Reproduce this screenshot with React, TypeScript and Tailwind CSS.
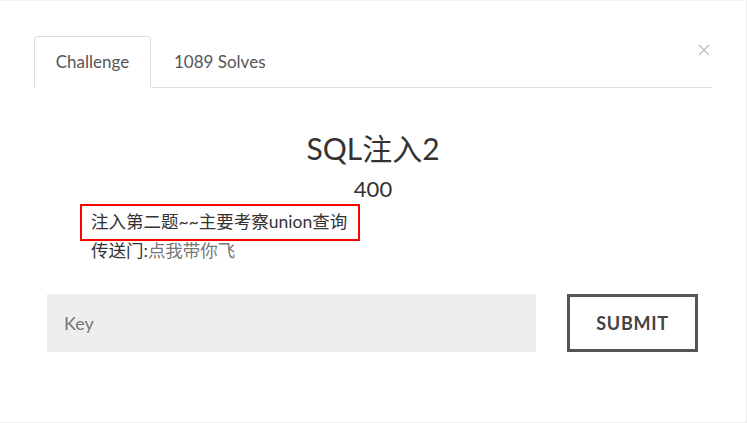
import React from 'react'

const font = { fontFamily: '"Lato", "Noto Sans CJK SC", sans-serif' }

export default function App() {
    return (
        <div
            className="w-[747px] h-[423px] bg-white border-t border-r border-b border-[#f0f0f0] overflow-hidden"
            style={font}
        >
            <div className="pt-[35px] px-[34px] w-full relative">
                {/* Tabs */}
                <div className="flex border-b border-[#ddd] h-[52px]">
                    <div className="w-[117px] h-[52px] -mb-px border border-[#ddd] border-b-white rounded-t-[4px] bg-white flex items-center justify-center text-[17px] text-[#555]">
                        Challenge
                    </div>
                    <div className="h-[51px] pl-[23px] flex items-center text-[17px] text-[#555]">
                        1089 Solves
                    </div>
                </div>

                {/* Close */}
                <button className="absolute right-[36px] top-[43px] w-[12px] h-[12px]">
                    <svg viewBox="0 0 12 12" className="w-[12px] h-[12px]">
                        <path d="M1 1L11 11M11 1L1 11" stroke="#c4c4c4" strokeWidth="1.6" />
                    </svg>
                </button>

                {/* Body */}
                <div className="text-center mt-[42px]">
                    <h1 className="text-[30px] leading-[36px] text-[#333]">SQL注入2</h1>
                    <div className="text-[22px] leading-[28px] text-[#333] mt-[9px]">400</div>
                </div>

                <div className="ml-[46px] mt-[1px] text-[17.5px] text-[#333]">
                    <div className="w-[280px] h-[37px] border-2 border-[#f00] pl-[9px] flex items-center">
                        注入第二题~~主要考察union查询
                    </div>
                    <div className="pl-[11px] leading-[20px]">
                        传送门:<a className="text-[#777]">点我带你飞</a>
                    </div>
                </div>

                {/* Form */}
                <div className="flex px-[13px] mt-[33px] gap-[31px]">
                    <input
                        placeholder="Key"
                        className="w-[489px] h-[58px] bg-[#eee] px-[17px] text-[18px] text-[#333] placeholder:text-[#777] outline-none"
                        style={font}
                    />
                    <button
                        className="w-[131px] h-[58px] border-[3px] border-[#555] text-[18px] font-bold tracking-[0.04em] text-[#444]"
                        style={font}
                    >
                        SUBMIT
                    </button>
                </div>
            </div>
        </div>
    )
}
